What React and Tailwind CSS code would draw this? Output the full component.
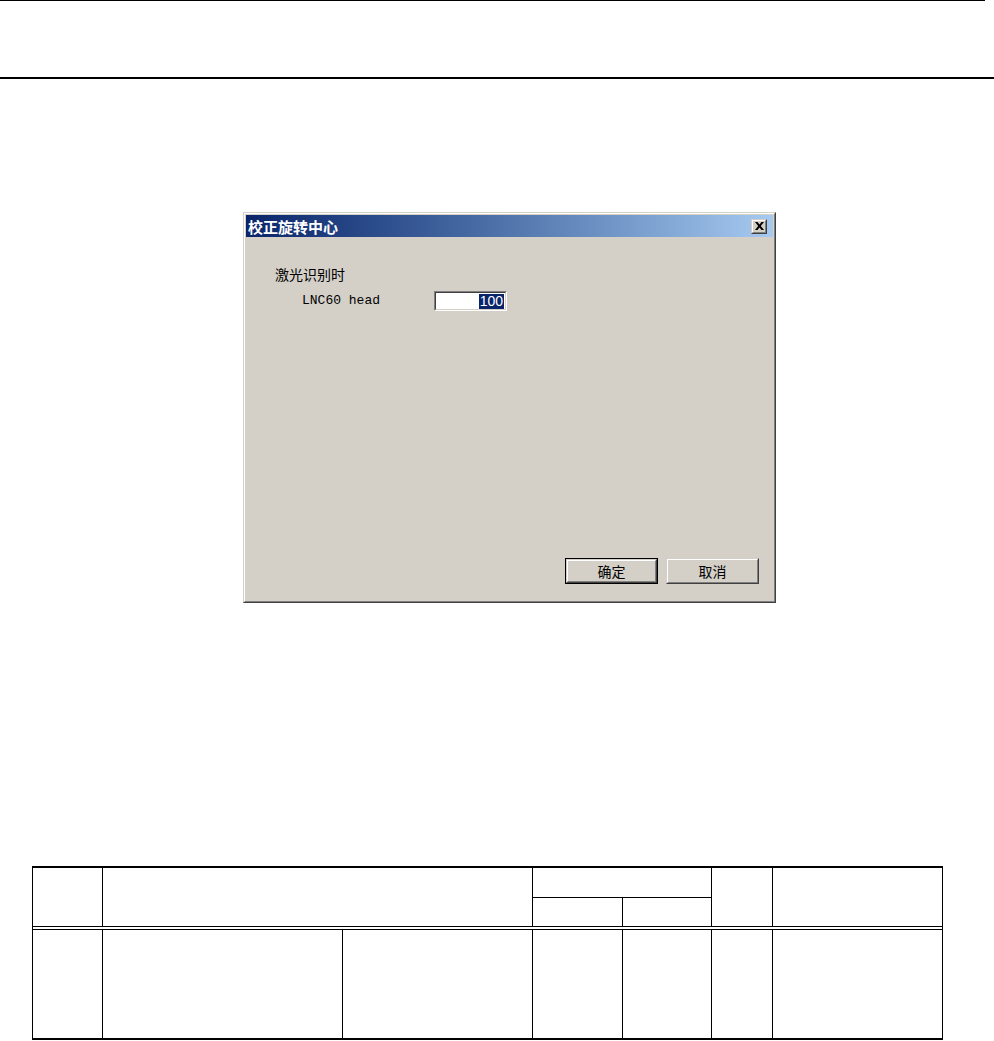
import React from 'react';

const cjk = "font-['Noto_Sans_CJK_SC','Noto_Sans',sans-serif]";

const Raised = ({ children, className = '' }) => (
  <div className={`border border-[#d4d0c8] border-r-[#404040] border-b-[#404040] ${className}`}>
    <div className="flex h-full w-full items-center justify-center border border-white border-r-[#808080] border-b-[#808080] bg-[#d4d0c8]">
      {children}
    </div>
  </div>
);

const Dialog = () => (
  <div className="ml-[243px] mt-[133px] h-[391px] w-[533px] border border-[#d4d0c8] border-r-[#404040] border-b-[#404040]">
    <div className="flex h-full flex-col border border-white border-r-[#808080] border-b-[#808080] bg-[#d4d0c8] p-px">
      {/* Title bar */}
      <div className="flex h-[22px] items-center justify-between bg-gradient-to-r from-[#0a246a] to-[#a6caf0] pl-[2px] pr-[6px]">
        <span className={`${cjk} text-[15px] font-bold leading-none text-white`}>校正旋转中心</span>
        <Raised className="h-[15px] w-[16px]">
          <svg width="9" height="8" viewBox="0 0 9 8">
            <path d="M0 0h2.5L4.5 2.5 6.5 0H9L5.8 4 9 8H6.5L4.5 5.5 2.5 8H0l3.2-4z" fill="#000" />
          </svg>
        </Raised>
      </div>

      {/* Body */}
      <div className="flex flex-1 flex-col pl-[29px] pr-[14px] pb-[16px]">
        <div className={`${cjk} mt-[29px] text-[14px] leading-[16px] text-black`}>激光识别时</div>
        <div className="mt-[9px] flex items-center pl-[27px]">
          <span className="w-[132px] font-['Liberation_Mono',monospace] text-[13px] text-black">LNC60 head</span>
          <div className="h-[20px] w-[73px] border border-[#808080] border-r-white border-b-white">
            <div className="flex h-full items-center justify-end border border-[#404040] border-r-[#d4d0c8] border-b-[#d4d0c8] bg-white pr-px">
              <span className="bg-[#0a246a] px-px font-['Liberation_Sans',sans-serif] text-[14px] leading-[15px] text-white">100</span>
            </div>
          </div>
        </div>

        <div className="mt-auto flex justify-end gap-[8px]">
          <div className="h-[26px] w-[93px] border border-black">
            <Raised className="h-full w-full">
              <span className={`${cjk} text-[14px] leading-none text-black`}>确定</span>
            </Raised>
          </div>
          <Raised className="h-[26px] w-[93px]">
            <span className={`${cjk} text-[14px] leading-none text-black`}>取消</span>
          </Raised>
        </div>
      </div>
    </div>
  </div>
);

const SpecTable = () => (
  <div className="ml-[32px] mt-[263px] w-[911px] border-x border-t-2 border-b-2 border-black">
    {/* Header */}
    <div className="grid grid-cols-[69px_430px_90px_89px_61px_170px] grid-rows-[29px_29px]">
      <div className="row-span-2" />
      <div className="row-span-2 border-l border-black" />
      <div className="col-span-2 border-l border-black" />
      <div className="row-span-2 border-l border-black" />
      <div className="row-span-2 border-l border-black" />
      <div className="border-l border-t border-black" />
      <div className="border-l border-t border-black" />
    </div>
    <div className="h-[4px] border-y border-black" />
    {/* Body */}
    <div className="grid h-[108px] grid-cols-[69px_240px_190px_90px_89px_61px_170px]">
      <div />
      <div className="border-l border-black" />
      <div className="border-l border-black" />
      <div className="border-l border-black" />
      <div className="border-l border-black" />
      <div className="border-l border-black" />
      <div className="border-l border-black" />
    </div>
  </div>
);

const App = () => {
  return (
    <div className="h-[1041px] w-[994px] overflow-hidden bg-white">
      <div className="h-px w-[985px] bg-black" />
      <div className="mt-[76px] h-[2px] w-full bg-black" />
      <Dialog />
      <SpecTable />
    </div>
  );
};

export default App;
